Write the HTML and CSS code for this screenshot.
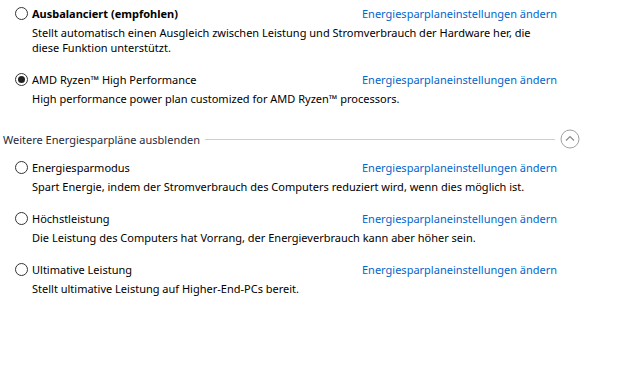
FILE: index.html
```html
<!DOCTYPE html>
<html lang="de">
<head>
  <meta charset="UTF-8" />
  <title>Energieoptionen</title>
  <link rel="stylesheet" href="styles.css">
</head>
<body>
  <div class="plan">
    <div class="plan-head">
      <label class="plan-name bold"><span class="radio"></span>Ausbalanciert (empfohlen)</label>
      <a class="plan-link" href="#">Energiesparplaneinstellungen ändern</a>
    </div>
    <p class="plan-desc">Stellt automatisch einen Ausgleich zwischen Leistung und Stromverbrauch der Hardware her, die<br>diese Funktion unterstützt.</p>
  </div>

  <div class="plan">
    <div class="plan-head">
      <label class="plan-name"><span class="radio checked"></span>AMD Ryzen™ High Performance</label>
      <a class="plan-link" href="#">Energiesparplaneinstellungen ändern</a>
    </div>
    <p class="plan-desc">High performance power plan customized for AMD Ryzen™ processors.</p>
  </div>

  <div class="section-head">
    <span class="section-title">Weitere Energiesparpläne ausblenden</span>
    <span class="section-line"></span>
    <span class="toggle">
      <svg width="20" height="20" viewBox="0 0 20 20"><circle cx="10" cy="10" r="9" fill="none" stroke="#a0a0a0" stroke-width="1"/><path d="M6 11.5 L10 7.5 L14 11.5" fill="none" stroke="#8a8a8a" stroke-width="1.2"/></svg>
    </span>
  </div>

  <div class="plan">
    <div class="plan-head">
      <label class="plan-name"><span class="radio"></span>Energiesparmodus</label>
      <a class="plan-link" href="#">Energiesparplaneinstellungen ändern</a>
    </div>
    <p class="plan-desc">Spart Energie, indem der Stromverbrauch des Computers reduziert wird, wenn dies möglich ist.</p>
  </div>

  <div class="plan">
    <div class="plan-head">
      <label class="plan-name"><span class="radio"></span>Höchstleistung</label>
      <a class="plan-link" href="#">Energiesparplaneinstellungen ändern</a>
    </div>
    <p class="plan-desc">Die Leistung des Computers hat Vorrang, der Energieverbrauch kann aber höher sein.</p>
  </div>

  <div class="plan">
    <div class="plan-head">
      <label class="plan-name"><span class="radio"></span>Ultimative Leistung</label>
      <a class="plan-link" href="#">Energiesparplaneinstellungen ändern</a>
    </div>
    <p class="plan-desc">Stellt ultimative Leistung auf Higher-End-PCs bereit.</p>
  </div>
</body>
</html>
```

FILE: styles.css
```css
body { margin: 0; padding: 6px 0 0 3px; background: #fff; color: #000; font-family: "Noto Sans", sans-serif; font-size: 11px; line-height: 15px; width: 637px; height: 366px; overflow: hidden; }
.plan { padding-left: 12px; margin-bottom: 17px; }
.plan-head { display: grid; grid-template-columns: 347px auto; align-items: center; }
.plan-name { display: flex; align-items: center; gap: 4px; }
.plan-name.bold { font-weight: bold; }
.radio { width: 11px; height: 11px; border: 1px solid #333; border-radius: 50%; background: #fff; display: inline-flex; align-items: center; justify-content: center; }
.radio.checked::after { content: ""; width: 7px; height: 7px; border-radius: 50%; background: #222; }
.plan-link { color: #0066cc; text-decoration: none; }
.plan-desc { margin: 4px 0 0 17px; }
.section-head { display: flex; align-items: center; margin: 23px 0 11px; }
.section-title { color: #1e2a3a; }
.section-line { width: 350px; height: 1px; background: #cfcfcf; margin-left: 5px; }
.toggle { display: flex; margin-left: 5px; }
```
